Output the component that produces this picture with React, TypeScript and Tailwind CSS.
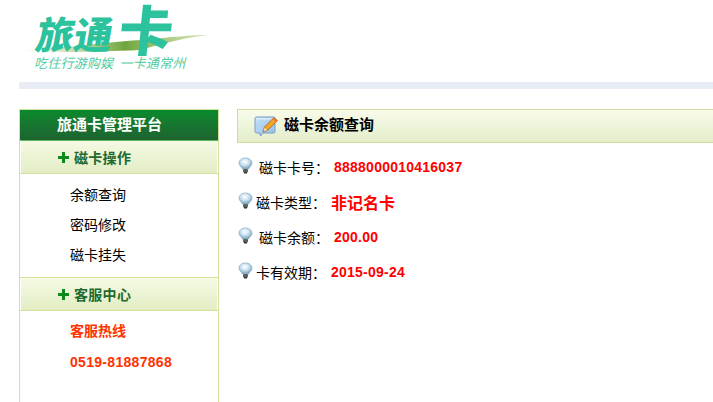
const cjk = "font-['Noto_Sans_CJK_SC','Liberation_Sans',sans-serif]";

function Bulb() {
  return (
    <svg width="15" height="17" viewBox="0 0 15 17" className="shrink-0">
      <defs>
        <radialGradient id="bulbg" cx="45%" cy="35%" r="65%">
          <stop offset="0%" stopColor="#ffffff" />
          <stop offset="50%" stopColor="#c9e0ee" />
          <stop offset="100%" stopColor="#6f9db8" />
        </radialGradient>
      </defs>
      <path d="M7.5 1C3.600 1 1 3.400 1 6.300c0 2.200 2.400 3.400 3.400 5.700h6.200C11.600 9.700 14 8.500 14 6.300 14 3.400 11.400 1 7.500 1z" fill="url(#bulbg)" stroke="#8fb2c8" strokeWidth="0.8" />
      <rect x="5" y="12" width="5" height="3.500" rx="1" fill="#5a615c" />
      <rect x="6" y="15" width="3" height="1.500" fill="#333633" />
    </svg>
  );
}

function Pencil() {
  return (
    <svg width="25" height="21" viewBox="0 0 25 21" className="shrink-0">
      <defs>
        <linearGradient id="pad" x1="0" y1="0" x2="1" y2="1">
          <stop offset="0%" stopColor="#c4e0f8" />
          <stop offset="100%" stopColor="#8fc0ec" />
        </linearGradient>
      </defs>
      <path d="M2.500 1h17c1 0 1.500.6 1.500 1.500v13c0 1-.5 1.500-1.500 1.500H9l-2.500 3-1-3h-3C1.500 17 1 16.500 1 15.500v-13C1 1.600 1.500 1 2.500 1z" fill="url(#pad)" stroke="#7d9cc4" strokeWidth="1" />
      <path d="M2.200 2.200h17.600v1.200H2.200z" fill="#ffffff" opacity="0.7" />
      <path d="M9 16l1.500-5L20 1.500 23.500 4.500 14 14z" fill="#f3a526" stroke="#a9661a" strokeWidth="0.8" />
      <path d="M9 16l1.500-5 3.500 3z" fill="#f9e3b6" stroke="#a9661a" strokeWidth="0.5" />
      <path d="M20 1.500L23.500 4.500 22 6 18.500 3z" fill="#e8743a" />
    </svg>
  );
}

function SectionHead({ label }: { label: string }) {
  return (
    <div className="h-[32px] flex items-center pl-[37px] border-x border-x-white bg-gradient-to-b from-[#f5fae3] to-[#e2edc4] text-[#22692f] text-[14px] font-bold tracking-[0.3px]">
      <span className="relative w-[11px] h-[11px] mr-[5px] shrink-0">
        <span className="absolute left-0 top-[4px] w-[11px] h-[3px] bg-[#0d8a1c]" />
        <span className="absolute left-[4px] top-0 w-[3px] h-[11px] bg-[#0d8a1c]" />
      </span>
      {label}
    </div>
  );
}

function InfoRow({ label, value, cjkValue, labelPad }: { label: string; value: string; cjkValue?: boolean; labelPad: string }) {
  return (
    <div className="h-[35px] flex items-start">
      <Bulb />
      <span className={`${labelPad} text-[14px] leading-[20px] text-black`}>{label}</span>
      <span className={`ml-[5px] leading-[20px] font-bold text-[#ff0000] ${cjkValue ? "text-[16px]" : "text-[14px] font-['Liberation_Sans',sans-serif] tracking-[0.24px]"}`}>{value}</span>
    </div>
  );
}

export default function App() {
  return (
    <div className={`w-[713px] h-[402px] overflow-hidden bg-white ${cjk}`}>
      <div className="relative h-[82px]">
        <svg width="190" height="32" viewBox="0 0 190 32" className="absolute left-[22px] top-[24px]">
          <defs>
            <linearGradient id="sw" x1="0" x2="1">
              <stop offset="0%" stopColor="#dcebc0" stopOpacity="0.3" />
              <stop offset="55%" stopColor="#6fa53c" />
              <stop offset="100%" stopColor="#bcd68a" stopOpacity="0.6" />
            </linearGradient>
          </defs>
          <path d="M2 26C40 25 70 19 120 16 150 13 170 11 186 11 160 14 140 20 118 26 70 28 30 29 2 26z" fill="url(#sw)" />
        </svg>
        <div className="absolute left-[37px] top-[11px] text-[#2bc29d] text-[38px] leading-[44px] font-black skew-x-[-10deg]">旅通</div>
        <div className="absolute left-[119px] top-[5px] text-[#2bc29d] text-[54px] leading-[54px] font-black skew-x-[-6deg] font-['Liberation_Sans','Noto_Sans_CJK_SC',sans-serif]">卡</div>
        <div className="absolute left-[34px] top-[54px] text-[#4fcb9d] text-[13px] leading-[18px] italic whitespace-pre tracking-[0.2px]">吃住行游购娱  一卡通常州</div>
      </div>

      <div className="h-[7px] ml-[19px] bg-[#e8ecf5]" />

      <div className="flex pl-[19px] pt-[20px]">
        <div className="w-[200px] h-[293px] shrink-0 border-x border-x-[#d2e29c] border-t border-t-[#d2e29c]">
          <div className="h-[31px] flex items-center pl-[37px] pb-[2px] bg-gradient-to-b from-[#078a2c] to-[#1d6330] text-white text-[15px] font-bold border-b border-b-[#5cb85c]">
            旅通卡管理平台
          </div>
          <SectionHead label="磁卡操作" />
          <div className="h-[105px] border-y border-y-[#d2e29c] flex flex-col pl-[50px] pt-[5px] text-[14px] text-black">
            <div className="h-[30px] leading-[30px]">余额查询</div>
            <div className="h-[30px] leading-[30px]">密码修改</div>
            <div className="h-[30px] leading-[30px]">磁卡挂失</div>
          </div>
          <SectionHead label="客服中心" />
          <div className="border-t border-t-[#d2e29c] pl-[50px] pt-[4px] font-bold text-[#ff3300] text-[14px]">
            <div className="h-[32px] leading-[30px]">客服热线</div>
            <div className="h-[31px] leading-[31px] font-['Liberation_Sans',sans-serif] tracking-[0.3px]">0519-81887868</div>
          </div>
        </div>

        <div className="flex-1 ml-[18px] min-w-0">
          <div className="h-[34px] flex items-center pl-[16px] gap-[5px] border border-[#cfdc9f] border-r-0 bg-gradient-to-b from-[#f8fbea] to-[#e3eecb] text-black text-[15px] font-bold">
            <Pencil />
            <span className="-mt-[3px]">磁卡余额查询</span>
          </div>
          <div className="flex flex-col pt-[14px] pl-[1px]">
            <InfoRow label="磁卡卡号：" value="8888000010416037" labelPad="pl-[6px]" />
            <InfoRow label="磁卡类型：" value="非记名卡" cjkValue labelPad="pl-[3px]" />
            <InfoRow label="磁卡余额：" value="200.00" labelPad="pl-[6px]" />
            <InfoRow label="卡有效期：" value="2015-09-24" labelPad="pl-[3px]" />
          </div>
        </div>
      </div>
    </div>
  );
}
